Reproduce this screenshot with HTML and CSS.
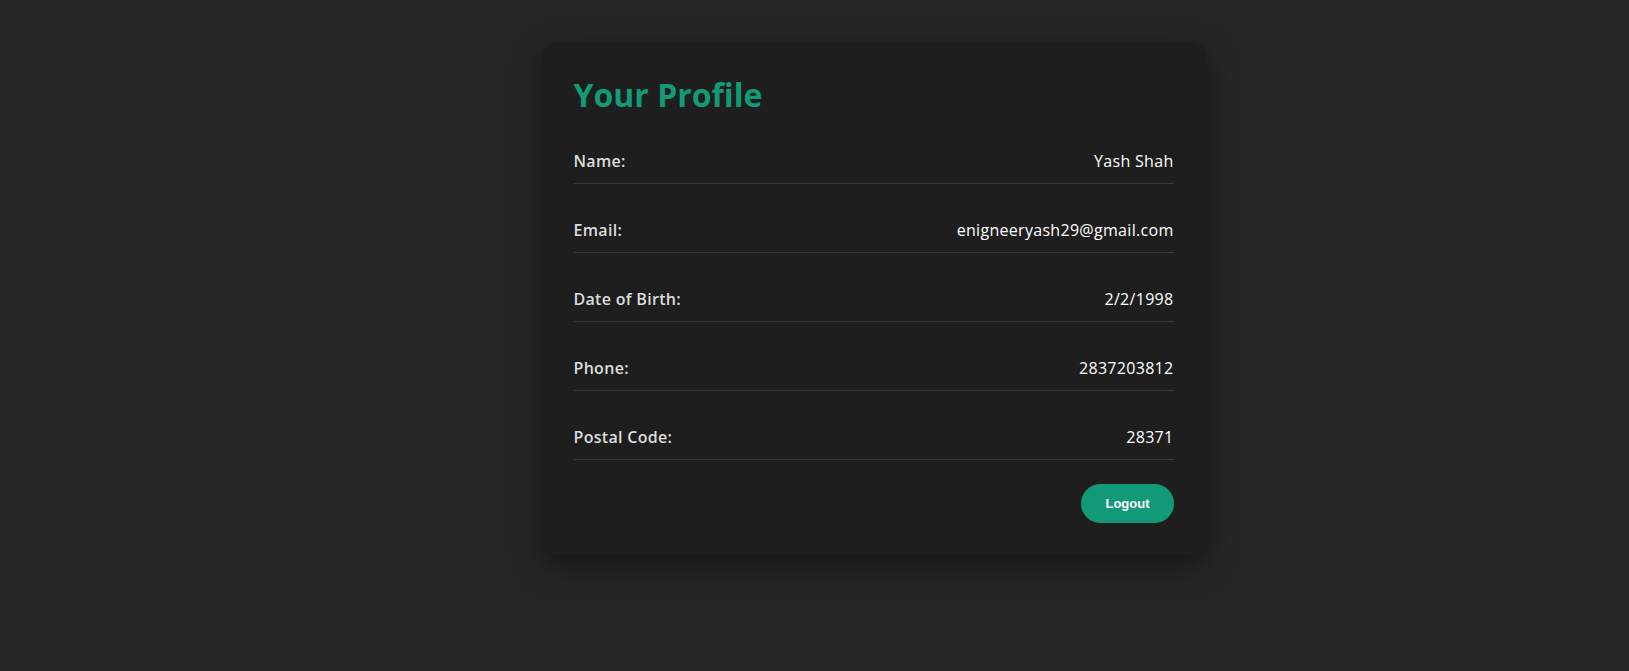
FILE: index.html
```html
<!DOCTYPE html>
<html lang="en">
<head>
<meta charset="utf-8">
<title>Your Profile</title>
<link rel="stylesheet" href="styles.css">
</head>
<body>
<main class="page">
  <section class="card">
    <h2 class="title">Your Profile</h2>
    <div class="row"><span class="label">Name:</span><span class="value">Yash Shah</span></div>
    <div class="row"><span class="label">Email:</span><span class="value">enigneeryash29@gmail.com</span></div>
    <div class="row"><span class="label">Date of Birth:</span><span class="value">2/2/1998</span></div>
    <div class="row"><span class="label">Phone:</span><span class="value">2837203812</span></div>
    <div class="row"><span class="label">Postal Code:</span><span class="value">28371</span></div>
    <div class="actions"><button class="logout" type="button">Logout</button></div>
  </section>
</main>
</body>
</html>
```

FILE: styles.css
```css
html, body {
  margin: 0;
  padding: 0;
  background: #262626;
  height: 100%;
}
body {
  font-family: "Open Sans", "Noto Sans", sans-serif;
  color: #e6e6e6;
}
.page {
  display: flex;
  justify-content: center;
  align-items: flex-start;
  padding: 43px 0 0 118px;
}
.card {
  box-sizing: border-box;
  width: 664px;
  padding: 32px;
  background: #1e1e1e;
  border-radius: 14px;
  box-shadow: 0 10px 30px rgba(0, 0, 0, 0.45);
}
.title {
  margin: 0 0 20px;
  font-size: 32px;
  line-height: 40px;
  font-weight: 700;
  color: #139a76;
}
.row {
  display: flex;
  justify-content: space-between;
  align-items: center;
  padding: 14px 0 10px;
  margin-bottom: 20px;
  border-bottom: 1px solid #383838;
  font-size: 16px;
  line-height: 24px;
  letter-spacing: 0.3px;
}
.label {
  color: #dcdcdc;
  font-weight: 600;
}
.value {
  color: #ffffff;
}
.actions {
  display: flex;
  justify-content: flex-end;
  padding-top: 4px;
}
.logout {
  font-family: "Liberation Sans", Arial, sans-serif;
  font-size: 13px;
  line-height: 15px;
  font-weight: 700;
  letter-spacing: 0;
  color: #ffffff;
  background: #129a78;
  border: none;
  border-radius: 999px;
  padding: 12px 24px;
  cursor: pointer;
}
```
